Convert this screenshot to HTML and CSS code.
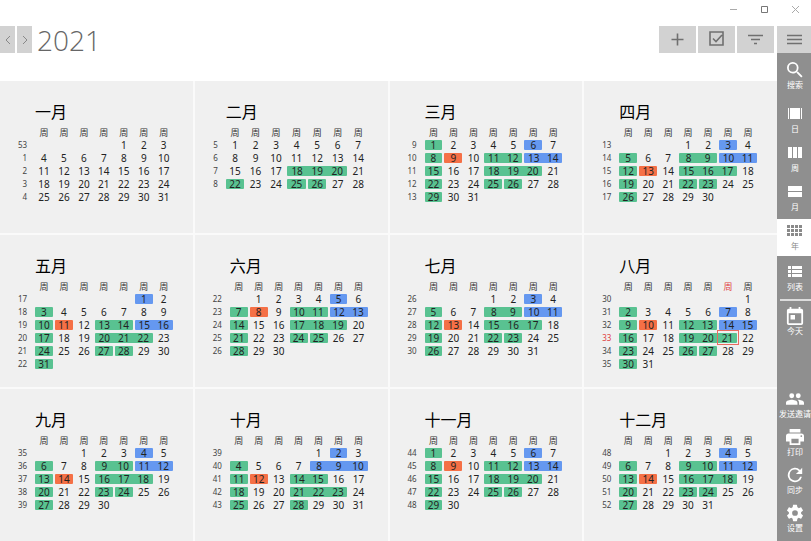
FILE: index.html
```html
<!DOCTYPE html>
<html lang="zh-CN">
<head>
    <meta charset="UTF-8">
    <meta name="viewport" content="width=device-width, initial-scale=1.0">
    <title>2021</title>
    <link rel="stylesheet" href="styles.css">
</head>
<body>
    <!-- Window buttons -->
    <header class="titlebar">
        <button class="win-btn" aria-label="最小化"><svg width="9" height="9" viewBox="0 0 9 9"><path d="M1 4.5h7"/></svg></button>
        <button class="win-btn win-max" aria-label="最大化"><svg width="9" height="9" viewBox="0 0 9 9"><path d="M1.500 1.500h6v6h-6z"/></svg></button>
        <button class="win-btn" aria-label="关闭"><svg width="9" height="9" viewBox="0 0 9 9"><path d="M1 1l7 7M8 1l-7 7"/></svg></button>
    </header>

    <div class="app">
        <main class="main">
            <div class="toolbar">
                <button class="nav-btn" aria-label="上一年"><svg width="8" height="10" viewBox="0 0 8 10"><path d="M6 1L2 5l4 4"/></svg></button>
                <button class="nav-btn" aria-label="下一年"><svg width="8" height="10" viewBox="0 0 8 10"><path d="M2 1l4 4-4 4"/></svg></button>
                <h1 class="year">2021</h1>
                <div class="actions">
                    <button class="tool-btn" aria-label="新建"><svg width="17" height="17" viewBox="0 0 17 17"><path d="M8.500 2.500v12M2.500 8.500h12"/></svg></button>
                    <button class="tool-btn" aria-label="任务"><svg width="17" height="17" viewBox="0 0 17 17"><path d="M2 1h13v13H2zM5 7.500l3 3 6-6.500"/></svg></button>
                    <button class="tool-btn" aria-label="筛选"><svg width="17" height="17" viewBox="0 0 17 17"><path d="M1 4.500h15M4 8.500h9M7 12.500h3"/></svg></button>
                </div>
            </div>

            <section class="calendar" id="calendar"></section>
        </main>

        <!-- Sidebar -->
        <nav class="sidebar">
            <button class="menu-btn" aria-label="菜单"><svg width="17" height="17" viewBox="0 0 17 17"><path d="M1 4.500h15M1 8.500h15M1 12.500h15"/></svg></button>
            <a href="#" class="item search">
                <svg viewBox="3 3 18 18"><path d="M15.500 14h-.79l-.28-.27A6.470 6.470 0 0 0 16 9.500 6.500 6.500 0 1 0 9.500 16c1.610 0 3.090-.59 4.230-1.570l.27.28v.79l5 4.990L20.490 19l-4.990-5zm-6 0a4.500 4.500 0 1 1 0-9 4.500 4.500 0 0 1 0 9z"/></svg>
                <span>搜索</span>
            </a>
            <a href="#" class="item">
                <svg viewBox="0 0 16 16"><path d="M1 2h1v11H1zM3 2h10v11H3zM14 2h1v11h-1z"/></svg>
                <span>日</span>
            </a>
            <a href="#" class="item">
                <svg viewBox="0 0 16 16"><path d="M1 2h4v11H1zM6 2h4v11H6zM11 2h4v11h-4z"/></svg>
                <span>周</span>
            </a>
            <a href="#" class="item">
                <svg viewBox="0 0 16 16"><path d="M1 2h14v5H1zM1 8h14v5H1z"/></svg>
                <span>月</span>
            </a>
            <a href="#" class="item active">
                <svg viewBox="0 0 16 16"><path d="M0 2h3v3H0zM4 2h3v3H4zM8 2h3v3H8zM12 2h3v3h-3zM0 6h3v3H0zM4 6h3v3H4zM8 6h3v3H8zM12 6h3v3h-3zM0 10h3v3H0zM4 10h3v3H4zM8 10h3v3H8zM12 10h3v3h-3z"/></svg>
                <span>年</span>
            </a>
            <a href="#" class="item list">
                <svg viewBox="0 0 16 16"><path d="M1 2h3v3H1zM5 2h10v3H5zM1 6h3v3H1zM5 6h10v3H5zM1 10h3v3H1zM5 10h10v3H5z"/></svg>
                <span>列表</span>
            </a>
            <hr class="divider">
            <a href="#" class="item today">
                <svg viewBox="3 1 18 20"><path d="M19 3h-1V1h-2v2H8V1H6v2H5a2 2 0 0 0-2 2v14a2 2 0 0 0 2 2h14a2 2 0 0 0 2-2V5a2 2 0 0 0-2-2zm0 16H5V8h14v11zM7 10h5v5H7z"/></svg>
                <span>今天</span>
            </a>
            <a href="#" class="item bottom">
                <svg viewBox="1 2 22 20"><path d="M16 11a3 3 0 1 0 0-6 3 3 0 0 0 0 6zm-8 0a3 3 0 1 0 0-6 3 3 0 0 0 0 6zm0 2c-2.330 0-7 1.170-7 3.500V19h14v-2.500c0-2.330-4.670-3.500-7-3.500zm8 0c-.29 0-.62.02-.97.05 1.160.84 1.970 1.970 1.970 3.450V19h6v-2.500c0-2.330-4.670-3.500-7-3.500z"/></svg>
                <span>发送邀请</span>
            </a>
            <a href="#" class="item">
                <svg viewBox="2 3 20 18"><path d="M19 8H5a3 3 0 0 0-3 3v6h4v4h12v-4h4v-6a3 3 0 0 0-3-3zm-3 11H8v-5h8v5zm3-7a1 1 0 1 1 0-2 1 1 0 0 1 0 2zm-1-9H6v4h12V3z"/></svg>
                <span>打印</span>
            </a>
            <a href="#" class="item">
                <svg viewBox="2 2 20 20"><path d="M17.650 6.350A8 8 0 1 0 19.730 14h-2.080A6 6 0 1 1 12 6c1.660 0 3.140.69 4.220 1.780L13 11h7V4l-2.350 2.350z"/></svg>
                <span>同步</span>
            </a>
            <a href="#" class="item">
                <svg viewBox="1 1 22 22"><path d="M19.430 12.980c.04-.32.07-.64.07-.98s-.03-.66-.07-.98l2.110-1.650c.19-.15.24-.42.12-.64l-2-3.460c-.12-.22-.39-.3-.61-.22l-2.490 1c-.52-.4-1.080-.73-1.690-.98l-.38-2.650A.488.488 0 0 0 14 2h-4c-.25 0-.46.18-.49.42l-.38 2.650c-.61.25-1.170.59-1.690.98l-2.490-1c-.23-.09-.49 0-.61.22l-2 3.460c-.13.22-.07.49.12.64l2.110 1.650c-.04.32-.07.65-.07.98s.03.66.07.98l-2.110 1.650c-.19.15-.24.42-.12.64l2 3.460c.12.22.39.3.61.22l2.490-1c.52.4 1.080.73 1.690.98l.38 2.650c.03.24.24.42.49.42h4c.25 0 .46-.18.49-.42l.38-2.650c.61-.25 1.170-.59 1.690-.98l2.490 1c.23.09.49 0 .61-.22l2-3.460c.12-.22.07-.49-.12-.64l-2.110-1.650zM12 15.500a3.500 3.500 0 1 1 0-7 3.500 3.500 0 0 1 0 7z"/></svg>
                <span>设置</span>
            </a>
        </nav>
    </div>

    <script src="script.js"></script>
</body>
</html>
```
FILE: styles.css
```css
* {
    box-sizing: border-box;
}

body {
    font-family: 'Noto Sans', 'Noto Sans CJK SC', sans-serif;
    margin: 0;
    background: #fff;
    color: #222;
    overflow: hidden;
    display: flex;
    flex-direction: column;
    height: 100vh;
}

button {
    border: none;
    padding: 0;
    cursor: pointer;
    display: flex;
    justify-content: center;
    align-items: center;
}

/* Window buttons */
.titlebar {
    display: flex;
    justify-content: flex-end;
    height: 26px;
    padding-bottom: 7px;
    flex: none;
}

.win-btn {
    width: 31px;
    background: transparent;
}

.win-btn svg {
    fill: none;
    stroke: #aaa;
}

.win-max svg {
    stroke: #777;
}

.app {
    display: flex;
    flex: 1;
    min-height: 0;
}

.main {
    flex: 1;
    min-width: 0;
    display: flex;
    flex-direction: column;
}

/* Toolbar */
.toolbar {
    display: flex;
    gap: 2px;
    height: 27px;
    margin-bottom: 28px;
    padding-right: 3px;
    flex: none;
}

.nav-btn {
    width: 15px;
    background: #d2d2d2;
}

.nav-btn svg {
    fill: none;
    stroke: #888;
}

.year {
    margin: 0 0 0 3px;
    font-family: 'Open Sans', sans-serif;
    font-size: 28px;
    font-weight: 300;
    line-height: 29px;
    color: #666;
}

.actions {
    display: flex;
    gap: 2px;
    margin-left: auto;
}

.tool-btn {
    width: 37px;
    background: #d2d2d2;
}

.tool-btn svg, .menu-btn svg {
    fill: none;
    stroke: #707070;
    stroke-width: 1.6;
}

/* Year view */
.calendar {
    flex: 1;
    min-height: 0;
    display: grid;
    grid-template-columns: repeat(4, 1fr);
    grid-template-rows: repeat(3, 1fr);
    gap: 2px;
    background: #fafafa;
}

.month {
    --week-col: 16px;
    background: #f0f0f0;
    padding: 19px 19px 0 18px;
    min-width: 0;
    min-height: 0;
}

/* only one-digit week numbers */
.month.short {
    --week-col: 12px;
}

.month h2 {
    margin: 0 0 0 var(--week-col);
    padding-left: 1px;
    font-size: 16px;
    font-weight: 400;
    line-height: 25px;
    color: #000;
}

.month table {
    width: 100%;
    table-layout: fixed;
    border-collapse: collapse;
}

.month th, .month td {
    height: 13px;
    padding: 0;
    font-size: 10px;
    font-weight: 400;
    line-height: 10px;
    text-align: center;
}

.month thead th {
    padding-top: 3px;
    font-size: 9px;
    color: #333;
}

.month .week {
    width: var(--week-col);
    padding-right: 7px;
    font-size: 8px;
    text-align: right;
    color: #444;
    white-space: nowrap;
}

.month .now {
    color: #e04040;
}

.day {
    display: block;
    margin: 0 1px;
    border-radius: 1px;
}

.green {
    background: #59c291;
}

.blue {
    background: #6598f0;
}

.red {
    background: #f57046;
}

.join-left {
    margin-left: 0;
    border-top-left-radius: 0;
    border-bottom-left-radius: 0;
}

.join-right {
    margin-right: 0;
    border-top-right-radius: 0;
    border-bottom-right-radius: 0;
}

.current {
    outline: 1px solid #e86b60;
}

/* Sidebar */
.sidebar {
    width: 34px;
    flex: none;
    display: flex;
    flex-direction: column;
    gap: 2px;
    padding-bottom: 4px;
    background: #8f8f8f;
    overflow: hidden;
}

.menu-btn {
    height: 27px;
    flex: none;
    background: #d2d2d2;
}

.item {
    display: flex;
    flex-direction: column;
    align-items: center;
    justify-content: center;
    height: 37px;
    flex: none;
    padding-left: 2px;
    color: #fff;
    font-size: 8px;
    line-height: 12px;
    text-decoration: none;
    white-space: nowrap;
}

.item svg {
    width: 16px;
    height: 16px;
    margin-bottom: 1px;
    fill: currentColor;
}

.item.search {
    margin: 3px 0 5px;
}

.item.active {
    background: #fff;
    color: #8a8a8a;
}

.item.list {
    margin-top: 2px;
}

.divider {
    width: 31px;
    height: 2px;
    margin: 0 0 0 3px;
    border: none;
    background: #ddd;
    flex: none;
}

.item.today svg, .item.bottom svg, .item.bottom ~ .item svg {
    width: 18px;
    height: 18px;
    margin-bottom: 0;
}

.item.bottom {
    margin-top: auto;
}

.item.bottom, .item.bottom ~ .item {
    height: 36px;
}
```
FILE: script.js
```js
const names = ['一月', '二月', '三月', '四月', '五月', '六月', '七月', '八月', '九月', '十月', '十一月', '十二月'];
const firstWeek = [53, 5, 9, 13, 17, 22, 26, 30, 35, 39, 44, 48];
const colors = { g: 'green', b: 'blue', r: 'red' };

// Marked days per month: color + day, or color + first-last day
const marks = [
    '',
    'g18-20 g22 g25 g26',
    'g1 b6 g8 r9 g11-12 b13-14 g15 g18-20 g22 g25 g26 g29',
    'b3 g5 g8-9 b10-11 g12 r13 g15-17 g19 g22 g23 g26',
    'b1 g3 g10 r11 g13-14 b15-16 g17 g20-22 g24 g27 g28 g31',
    'b5 g7 r8 g10-11 b12-13 g14 g17-19 g21 g24 g25 g28',
    'b3 g5 g8-9 b10-11 g12 r13 g15-17 g19 g22 g23 g26',
    'g2 b7 g9 r10 g12-13 b14-15 g16 g19-21 g23 g26 g27 g30',
    'b4 g6 g9-10 b11-12 g13 r14 g16-18 g20 g23 g24 g27',
    'b2 g4 b8-10 g11 r12 g14-15 g18 g21-23 g25 g28',
    'g1 b6 g8 r9 g11-12 b13-14 g15 g18-20 g22 g25 g26 g29',
    'b4 g6 g9-10 b11-12 g13 r14 g16-18 g20 g23 g24 g27'
];

const today = { month: 7, day: 21, week: 33, column: 5 };

function dayClasses(text) {
    const classes = {};
    text.split(' ').filter(Boolean).forEach(function(mark) {
        const range = mark.slice(1).split('-').map(Number);
        const first = range[0];
        const last = range[1] || first;
        for (let d = first; d <= last; d++) {
            classes[d] = ' ' + colors[mark[0]];
            if (d > first) classes[d] += ' join-left';
            if (d < last) classes[d] += ' join-right';
        }
    });
    return classes;
}

function monthHtml(m) {
    const offset = (new Date(2021, m, 1).getDay() + 6) % 7; // Monday first
    const count = new Date(2021, m + 1, 0).getDate();
    const classes = dayClasses(marks[m]);

    let html = '<article class="month' + (m === 1 ? ' short' : '') + '"><h2>' + names[m] + '</h2>';
    html += '<table><thead><tr><td class="week"></td>';
    for (let i = 0; i < 7; i++) {
        const now = m === today.month && i === today.column;
        html += '<th scope="col"' + (now ? ' class="now"' : '') + '>周</th>';
    }
    html += '</tr></thead><tbody>';

    for (let row = 0; row * 7 < offset + count; row++) {
        const week = m === 0 && row > 0 ? row : firstWeek[m] + row;
        const now = m === today.month && week === today.week;
        html += '<tr><th scope="row" class="week' + (now ? ' now' : '') + '">' + week + '</th>';
        for (let i = 0; i < 7; i++) {
            const d = row * 7 + i - offset + 1;
            if (d < 1 || d > count) {
                html += '<td></td>';
                continue;
            }
            const current = m === today.month && d === today.day;
            html += '<td' + (current ? ' class="current"' : '') + '><span class="day' + (classes[d] || '') + '">' + d + '</span></td>';
        }
        html += '</tr>';
    }
    return html + '</tbody></table></article>';
}

document.getElementById('calendar').innerHTML = names.map(function(name, m) {
    return monthHtml(m);
}).join('');
```
